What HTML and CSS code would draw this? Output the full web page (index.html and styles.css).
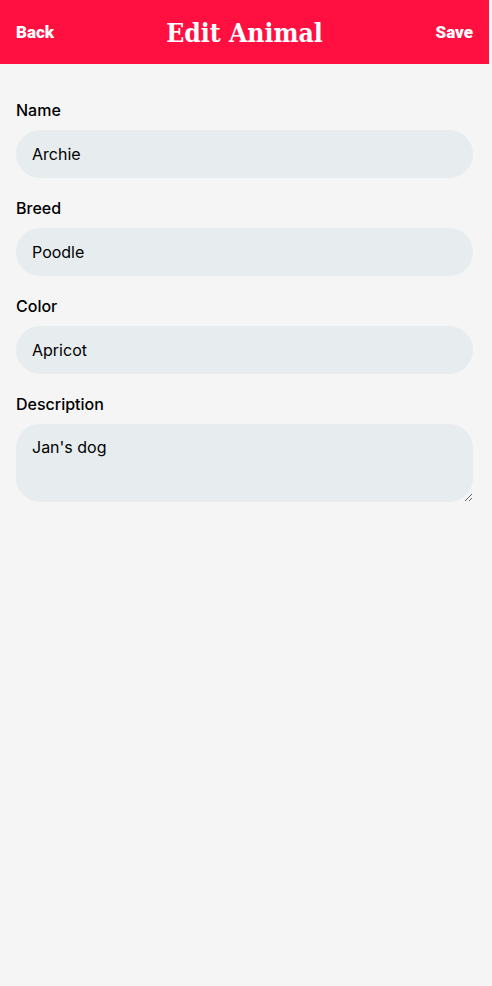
FILE: index.html
```html
<!DOCTYPE html>
<html>
<head>
<meta charset="utf-8">
<link rel="stylesheet" href="styles.css">
</head>
<body>
<div class="app">
  <header class="topbar">
    <span class="nav-btn">Back</span>
    <h1 class="title">Edit Animal</h1>
    <span class="nav-btn">Save</span>
  </header>
  <form class="form">
    <label class="field">
      <span class="label">Name</span>
      <input class="input" type="text" value="Archie">
    </label>
    <label class="field">
      <span class="label">Breed</span>
      <input class="input" type="text" value="Poodle">
    </label>
    <label class="field">
      <span class="label">Color</span>
      <input class="input" type="text" value="Apricot">
    </label>
    <label class="field">
      <span class="label">Description</span>
      <textarea class="input textarea">Jan's dog</textarea>
    </label>
  </form>
</div>
</body>
</html>
```

FILE: styles.css
```css
html, body {
  margin: 0;
  padding: 0;
  background: #f5f5f5;
}
body {
  font-family: Inter, "Noto Sans", sans-serif;
}
.app {
  width: calc(100% - 3px);
  min-height: 986px;
}
.topbar {
  height: 64px;
  background: #ff1040;
  display: flex;
  align-items: center;
  justify-content: space-between;
  padding: 0 16px;
  color: #fff;
  box-sizing: border-box;
}
.nav-btn {
  font-family: Roboto, sans-serif;
  font-weight: 900;
  font-size: 17px;
  width: 60px;
}
.nav-btn:last-child {
  text-align: right;
}
.title {
  margin: 0;
  font-family: "DejaVu Serif Condensed", "DejaVu Serif", serif;
  font-stretch: condensed;
  font-weight: 700;
  font-size: 26.3px;
}
.form {
  display: flex;
  flex-direction: column;
  gap: 20px;
  padding: 36px 16px 0;
}
.field {
  display: flex;
  flex-direction: column;
  gap: 10px;
}
.label {
  font-size: 16px;
  font-weight: 500;
  color: #000;
  line-height: 20px;
}
.input {
  font-family: Inter, "Noto Sans", sans-serif;
  font-size: 16px;
  color: #000;
  background: #e7ecee;
  border: none;
  border-radius: 24px;
  height: 48px;
  padding: 0 16px;
  box-sizing: border-box;
  width: 100%;
  outline: none;
}
.textarea {
  height: 78px;
  padding: 12px 16px;
  line-height: 22px;
  resize: vertical;
}
```
